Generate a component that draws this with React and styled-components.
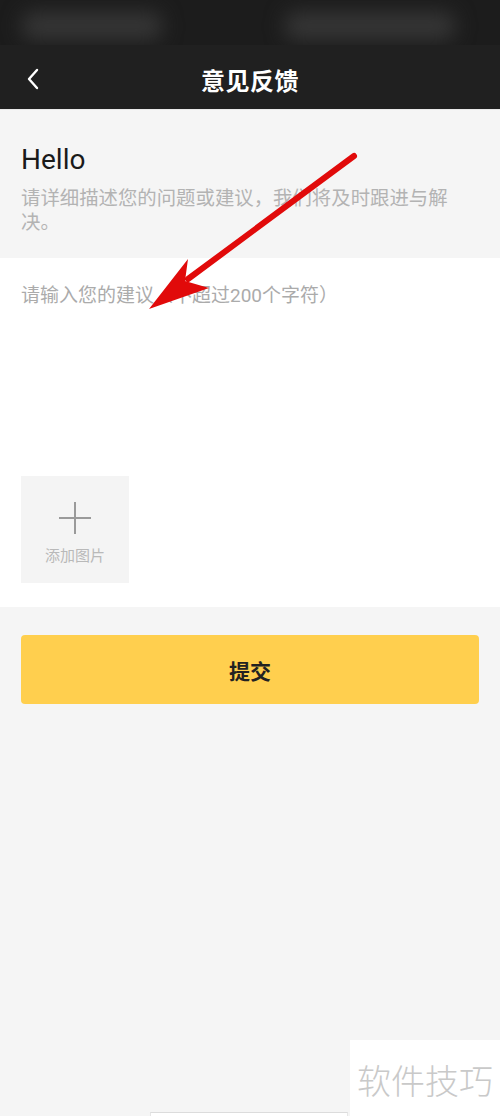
import React from "react"
import styled, { createGlobalStyle } from "styled-components"

const GlobalStyle = createGlobalStyle`
  html, body {
    margin: 0;
    padding: 0;
    background: #f5f5f5;
  }
  * {
    box-sizing: border-box;
  }
`

const Page = styled.div`
  position: relative;
  width: 500px;
  min-height: 1116px;
  overflow: hidden;
  background: #f5f5f5;
  font-family: Roboto, "Noto Sans CJK SC", sans-serif;
`

const StatusBar = styled.div`
  height: 45px;
  background: #1c1c1c;
  display: flex;
  align-items: center;
  justify-content: space-between;
  padding: 6px 45px 0 22px;
  overflow: hidden;
`

const Blob = styled.div`
  width: ${p => p.$w}px;
  height: 28px;
  border-radius: 10px;
  background: #363636;
  filter: blur(10px);
`

const NavBar = styled.div`
  height: 65px;
  background: #202020;
  display: grid;
  grid-template-columns: 70px 1fr 70px;
  align-items: center;
  border-bottom: 1px solid #e9e9e9;
`

const BackButton = styled.div`
  display: flex;
  align-items: center;
  padding-left: 26px;
  padding-top: 4px;
`

const Title = styled.h1`
  margin: 0;
  text-align: center;
  color: #ffffff;
  font-size: 24px;
  font-weight: 700;
  letter-spacing: 0.5px;
  padding-top: 5px;
`

const Intro = styled.section`
  background: #f5f5f5;
  padding: 32px 21px 23px;
`

const Hello = styled.h2`
  margin: 0;
  font-size: 28px;
  font-weight: 400;
  line-height: 36px;
  color: #1a1a1a;
`

const Desc = styled.p`
  margin: 9px 0 0;
  width: 440px;
  font-size: 19.4px;
  line-height: 24px;
  color: #b3b3b3;
`

const Editor = styled.section`
  background: #ffffff;
  padding: 24px 21px 24px;
`

const Input = styled.textarea`
  display: block;
  width: 100%;
  height: 194px;
  border: none;
  outline: none;
  resize: none;
  padding: 0;
  margin: 0;
  background: transparent;
  font-family: Roboto, "Noto Sans CJK SC", sans-serif;
  font-size: 19px;
  line-height: 27px;
  color: #333;
  &::placeholder {
    color: #ababab;
  }
`

const Picker = styled.div`
  width: 108px;
  height: 107px;
  background: #f4f4f4;
  display: flex;
  flex-direction: column;
  align-items: center;
  padding-top: 25px;
  gap: 9px;
`

const PickerLabel = styled.span`
  font-size: 15px;
  color: #b9b9b9;
`

const Submit = styled.button`
  display: block;
  margin: 28px 21px 0;
  width: 458px;
  height: 69px;
  border: none;
  border-radius: 4px;
  background: #ffcf4e;
  font-family: Roboto, "Noto Sans CJK SC", sans-serif;
  font-size: 21px;
  font-weight: 700;
  color: #222;
`

const Overlay = styled.svg`
  position: absolute;
  top: 0;
  left: 0;
  pointer-events: none;
`

const Watermark = styled.div`
  position: absolute;
  right: 0;
  bottom: 0;
  width: 150px;
  height: 76px;
  background: #ffffff;
  display: flex;
  align-items: center;
  justify-content: center;
  font-family: "Noto Sans CJK SC", sans-serif;
  font-size: 34px;
  font-weight: 300;
  color: #c9c9c9;
  padding-top: 2px;
`

const HomeBar = styled.div`
  position: absolute;
  left: 150px;
  bottom: 0;
  width: 198px;
  height: 4px;
  background: #ffffff;
  border-top: 1px solid #dcdcdc;
  border-left: 1px solid #e6e6e6;
  border-right: 1px solid #e6e6e6;
`

export default function App() {
  return (
    <Page>
      <GlobalStyle />
      <StatusBar>
        <Blob $w={140} />
        <Blob $w={170} />
      </StatusBar>
      <NavBar>
        <BackButton>
          <svg width="14" height="22" viewBox="0 0 14 22">
            <path d="M11 2 L3 11 L11 20" fill="none" stroke="#fff" strokeWidth="2.4" strokeLinecap="round" strokeLinejoin="round" />
          </svg>
        </BackButton>
        <Title>意见反馈</Title>
        <div />
      </NavBar>
      <Intro>
        <Hello>Hello</Hello>
        <Desc>请详细描述您的问题或建议，我们将及时跟进与解决。</Desc>
      </Intro>
      <Editor>
        <Input placeholder="请输入您的建议（不超过200个字符）" />
        <Picker>
          <svg width="34" height="34" viewBox="0 0 34 34">
            <path d="M17 1 V33 M1 17 H33" stroke="#9a9a9a" strokeWidth="2" />
          </svg>
          <PickerLabel>添加图片</PickerLabel>
        </Picker>
      </Editor>
      <Submit>提交</Submit>
      <HomeBar />
      <Watermark>软件技巧</Watermark>
      <Overlay width="500" height="1116" viewBox="0 0 500 1116">
        <line x1="354" y1="156" x2="188" y2="279" stroke="#e10a0a" strokeWidth="6" strokeLinecap="round" />
        <polygon points="149,309 188,259 185,281 209,288" fill="#e10a0a" />
      </Overlay>
    </Page>
  )
}
